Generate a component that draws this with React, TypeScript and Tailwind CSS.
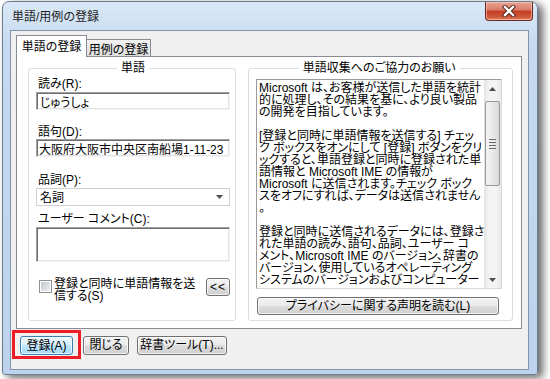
import clsx from "clsx";

const noteLines = [
  "Microsoft は、お客様が送信した単語を統計",
  "的に処理し、その結果を基に、より良い製品",
  "の開発を目指しています。",
  "",
  "[登録と同時に単語情報を送信する] チェッ",
  "ク ボックスをオンにして [登録] ボタンをクリ",
  "ックすると、単語登録と同時に登録された単",
  "語情報と Microsoft IME の情報が",
  "Microsoft に送信されます。チェック ボック",
  "スをオフにすれば、データは送信されません",
  "。",
  "",
  "登録と同時に送信されるデータには、登録さ",
  "れた単語の読み、語句、品詞、ユーザー コ",
  "メント、Microsoft IME のバージョン、辞書の",
  "バージョン、使用しているオペレーティング",
  "システムのバージョンおよびコンピューター",
];

function WinButton({
  children,
  primary = false,
  className = "",
}: {
  children: React.ReactNode;
  primary?: boolean;
  className?: string;
}) {
  return (
    <button
      type="button"
      className={clsx(
        "flex items-center justify-center rounded-[3px] border leading-[12px] shadow-[inset_0_0_0_1px_rgba(255,255,255,0.75)]",
        primary
          ? "border-[#3c7fb1] bg-[linear-gradient(#eaf6fd_0%,#d9f0fc_50%,#bee6fd_50%,#a7d9f5_100%)]"
          : "border-[#707070] bg-[linear-gradient(#f2f2f2_0%,#ebebeb_50%,#dddddd_50%,#cfcfcf_100%)]",
        className
      )}
    >
      {children}
    </button>
  );
}

function Sunken({ className = "", children }: { className?: string; children?: React.ReactNode }) {
  return (
    <div
      className={clsx(
        "border border-t-[#a0a0a0] border-l-[#a0a0a0] border-r-[#f4f4f4] border-b-[#f4f4f4] bg-white shadow-[inset_1px_1px_0_#6e6e6e,inset_-1px_-1px_0_#e3e3e3]",
        className
      )}
    >
      {children}
    </div>
  );
}

function Arrow({ up = false }: { up?: boolean }) {
  return (
    <svg width="7" height="4" viewBox="0 0 7 4">
      <path d={up ? "M0 4 L3.5 0 L7 4 Z" : "M0 0 L3.5 4 L7 0 Z"} fill="#4e4e4e" />
    </svg>
  );
}

function ScrollBar() {
  return (
    <div className="flex w-[17px] flex-col bg-[linear-gradient(90deg,#e2e2e2,#f3f3f3_25%,#f3f3f3_75%,#e8e8e8)]">
      <div className="flex h-[17px] items-center justify-center">
        <Arrow up />
      </div>
      <div className="mx-[1px] mt-[4px] flex h-[85px] flex-col items-center justify-center gap-[2px] rounded-[2px] border border-[#979797] bg-[linear-gradient(90deg,#f4f4f4,#e9e9e9_50%,#d9d9d9)]">
        <div className="h-px w-[7px] bg-[#6b6b6b]" />
        <div className="h-px w-[7px] bg-[#6b6b6b]" />
        <div className="h-px w-[7px] bg-[#6b6b6b]" />
        <div className="h-px w-[7px] bg-[#6b6b6b]" />
      </div>
      <div className="flex-1" />
      <div className="flex h-[17px] items-center justify-center">
        <Arrow />
      </div>
    </div>
  );
}

function CloseButton() {
  return (
    <div className="mr-[4px] flex h-[19px] w-[48px] items-center justify-center rounded-b-[4px] border border-t-0 border-[#6b2a1f] bg-[linear-gradient(#e8a595_0%,#d97a66_45%,#c23d24_50%,#cf5a3c_85%,#e18a6a_100%)] shadow-[inset_0_0_0_1px_rgba(255,220,210,0.5)]">
      <svg width="14" height="12" viewBox="0 0 14 12">
        <path d="M3 2 L11 10 M11 2 L3 10" stroke="#4a2018" strokeWidth="4.2" strokeLinecap="square" />
        <path d="M3 2 L11 10 M11 2 L3 10" stroke="#ffffff" strokeWidth="2.4" strokeLinecap="square" />
      </svg>
    </div>
  );
}

export default function App() {
  return (
    <div className="h-[379px] w-[550px] overflow-hidden bg-white pl-[2px] pt-[1px] font-['Liberation_Sans','Noto_Sans_CJK_JP',sans-serif] text-[12px] leading-[12px] text-black [font-feature-settings:'palt']">
      <div className="flex h-[374px] w-[536px] flex-col rounded-t-[7px] rounded-b-[3px] border border-[#6d7d90] bg-[linear-gradient(180deg,#dae8f6_0%,#c5daf0_12%,#bbd3ed_100%)] shadow-[5px_3px_8px_rgba(0,0,0,0.6)]">
        {/* title bar */}
        <div className="flex h-[28px] items-start justify-between">
          <span className="pl-[9px] pt-[9px] text-[#1e1e1e]">単語/用例の登録</span>
          <CloseButton />
        </div>

        {/* client area */}
        <div className="ml-[7px] flex h-[340px] w-[519px] flex-col border border-[#8393a8] bg-[#f0f0f0]">
          {/* tabs */}
          <div className="relative z-10 -mb-px flex items-end pl-[5px] pt-[4px]">
            <div className="flex h-[22px] w-[71px] items-start justify-center border-x border-t border-[#898c95] bg-white pt-[5px]">
              単語の登録
            </div>
            <div className="mb-px flex h-[17px] w-[64px] items-start justify-center border-r border-t border-[#898c95] bg-[linear-gradient(#f2f2f2,#dedede)] pt-[4px]">
              用例の登録
            </div>
          </div>

          {/* tab panel */}
          <div className="ml-[5px] flex h-[273px] w-[506px] gap-[12px] border border-[#898c95] bg-white pl-[11px] pt-[5px]">
            <fieldset className="flex h-[259px] w-[208px] flex-col rounded-[3px] border border-[#d5dfe5] pl-[7px] pr-[5px]">
              <legend className="mx-auto px-[4px] leading-[12px]">単語</legend>
              <div className="mt-[4px] pl-[2px]">読み(R):</div>
              <Sunken className="mt-[2px] h-[18px] pl-[3px] pt-[4px]">じゅうしょ</Sunken>
              <div className="mt-[16px] pl-[2px]">語句(D):</div>
              <Sunken className="mt-[1px] h-[18px] overflow-hidden whitespace-nowrap pl-[2px] pt-[4px]">
                大阪府大阪市中央区南船場1-11-23
              </Sunken>
              <div className="mt-[17px] pl-[2px]">品詞(P):</div>
              <div className="mt-[2px] flex h-[18px] items-center justify-between border border-[#cfcfcf] bg-white pl-[3px] pr-[6px]">
                <span className="pt-px">名詞</span>
                <Arrow />
              </div>
              <div className="mt-[7px] pl-[2px]">ユーザー コメント(C):</div>
              <Sunken className="mt-[2px] h-[35px]" />
              <div className="mt-[15px] flex items-start">
                <div className="ml-[3px] mt-[3px] flex h-[13px] w-[13px] items-center justify-center border border-[#8e8f8f] bg-white">
                  <div className="h-[9px] w-[9px] bg-[linear-gradient(135deg,#c3c8cf,#eef0f2)]" />
                </div>
                <div className="ml-[2px] whitespace-nowrap pt-px">
                  登録と同時に単語情報を送
                  <br />
                  信する(S)
                </div>
                <div className="flex-1" />
                <WinButton className="mt-px h-[18px] w-[24px] tracking-[1px]">&lt;&lt;</WinButton>
              </div>
            </fieldset>

            <fieldset className="flex h-[259px] w-[261px] flex-col rounded-[3px] border border-[#d5dfe5] pl-[7px] pr-[10px]">
              <legend className="mx-auto px-[4px] leading-[12px]">単語収集へのご協力のお願い</legend>
              <div className="mt-[5px] flex h-[210px] border border-t-[#9a9a9a] border-l-[#9a9a9a] border-r-[#d9d9d9] border-b-[#d9d9d9] bg-white">
                <div className="flex-1 overflow-hidden pl-[2px] pt-[2px]">
                  {noteLines.map((line, i) => (
                    <div key={i} className="h-[12px] whitespace-pre">
                      {line}
                    </div>
                  ))}
                </div>
                <ScrollBar />
              </div>
              <WinButton className="ml-px mt-[8px] h-[18px] w-[242px]">プライバシーに関する声明を読む(L)</WinButton>
            </fieldset>
          </div>

          {/* bottom buttons */}
          <div className="ml-px mt-px flex items-center">
            <div className="border-[3px] border-[#ee1c24] pb-[1px] pl-[5px] pr-[5px] pt-[3px]">
              <WinButton primary className="h-[19px] w-[53px]">
                登録(A)
              </WinButton>
            </div>
            <WinButton className="ml-[2px] mt-px h-[19px] w-[46px]">閉じる</WinButton>
            <WinButton className="ml-[8px] mt-px h-[19px] w-[90px]">辞書ツール(T)...</WinButton>
          </div>
        </div>
      </div>
    </div>
  );
}
